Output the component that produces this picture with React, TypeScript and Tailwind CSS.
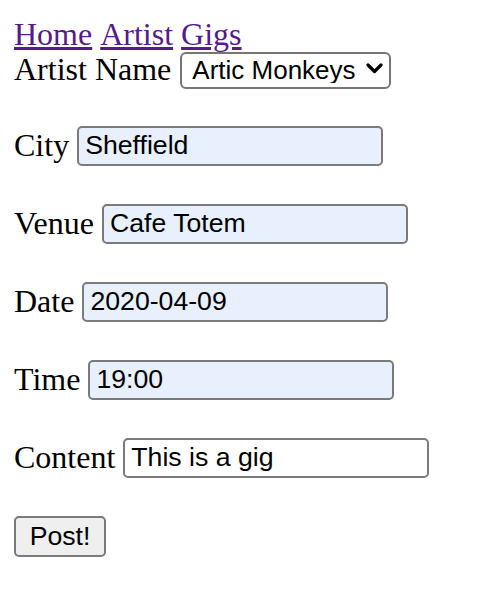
export default function App() {
  const fields = [
    { label: 'City', value: 'Sheffield', autofilled: true },
    { label: 'Venue', value: 'Cafe Totem', autofilled: true },
    { label: 'Date', value: '2020-04-09', autofilled: true },
    { label: 'Time', value: '19:00', autofilled: true },
    { label: 'Content', value: 'This is a gig', autofilled: false },
  ];

  return (
    <div className="min-h-screen bg-white pt-[16px] pl-[14px] text-black font-['Liberation_Serif',serif] text-[32px] leading-[normal]">
      {/* Nav links */}
      <nav className="flex gap-[8px]">
        <a href="#" className="text-[#551a8b] underline">Home</a>
        <a href="#" className="text-[#551a8b] underline">Artist</a>
        <a href="#" className="text-[#551a8b] underline">Gigs</a>
      </nav>

      <form className="flex flex-col items-start gap-[38px] mt-[-3px]">
        {/* Artist select */}
        <div className="flex items-center gap-[9px]">
          <label>Artist Name</label>
          <div className="relative">
            <select
              defaultValue="Artic Monkeys"
              className="appearance-none h-[37px] w-[211px] rounded-[6px] border-2 border-[#767676] bg-white pl-[10px] pr-[30px] font-['Liberation_Sans',sans-serif] text-[26px] leading-none"
            >
              <option>Artic Monkeys</option>
            </select>
            <svg
              className="absolute right-[8px] top-[13px] pointer-events-none"
              width="17"
              height="11"
              viewBox="0 0 17 11"
              fill="none"
            >
              <polyline points="2,2 8.5,8.5 15,2" stroke="black" strokeWidth="3.2" strokeLinecap="round" strokeLinejoin="round" />
            </svg>
          </div>
        </div>

        {fields.map((f, i) => (
          <div key={f.label} className={`flex items-center gap-[8px] ${i === 0 ? 'mt-[-1px]' : ''}`}>
            <label>{f.label}</label>
            <input
              type="text"
              defaultValue={f.value}
              className={`h-[40px] w-[306px] rounded-[5px] border-2 border-[#7a7a7a] px-[6px] font-['Liberation_Sans',sans-serif] text-[26.67px] leading-none ${
                f.autofilled ? 'bg-[#e8f0fe]' : 'bg-white'
              }`}
            />
          </div>
        ))}

        <button
          type="button"
          className="h-[41px] w-[92px] rounded-[5px] border-2 border-[#7a7a7a] bg-[#efefef] font-['Liberation_Sans',sans-serif] text-[26.67px] leading-none"
        >
          Post!
        </button>
      </form>
    </div>
  );
}
